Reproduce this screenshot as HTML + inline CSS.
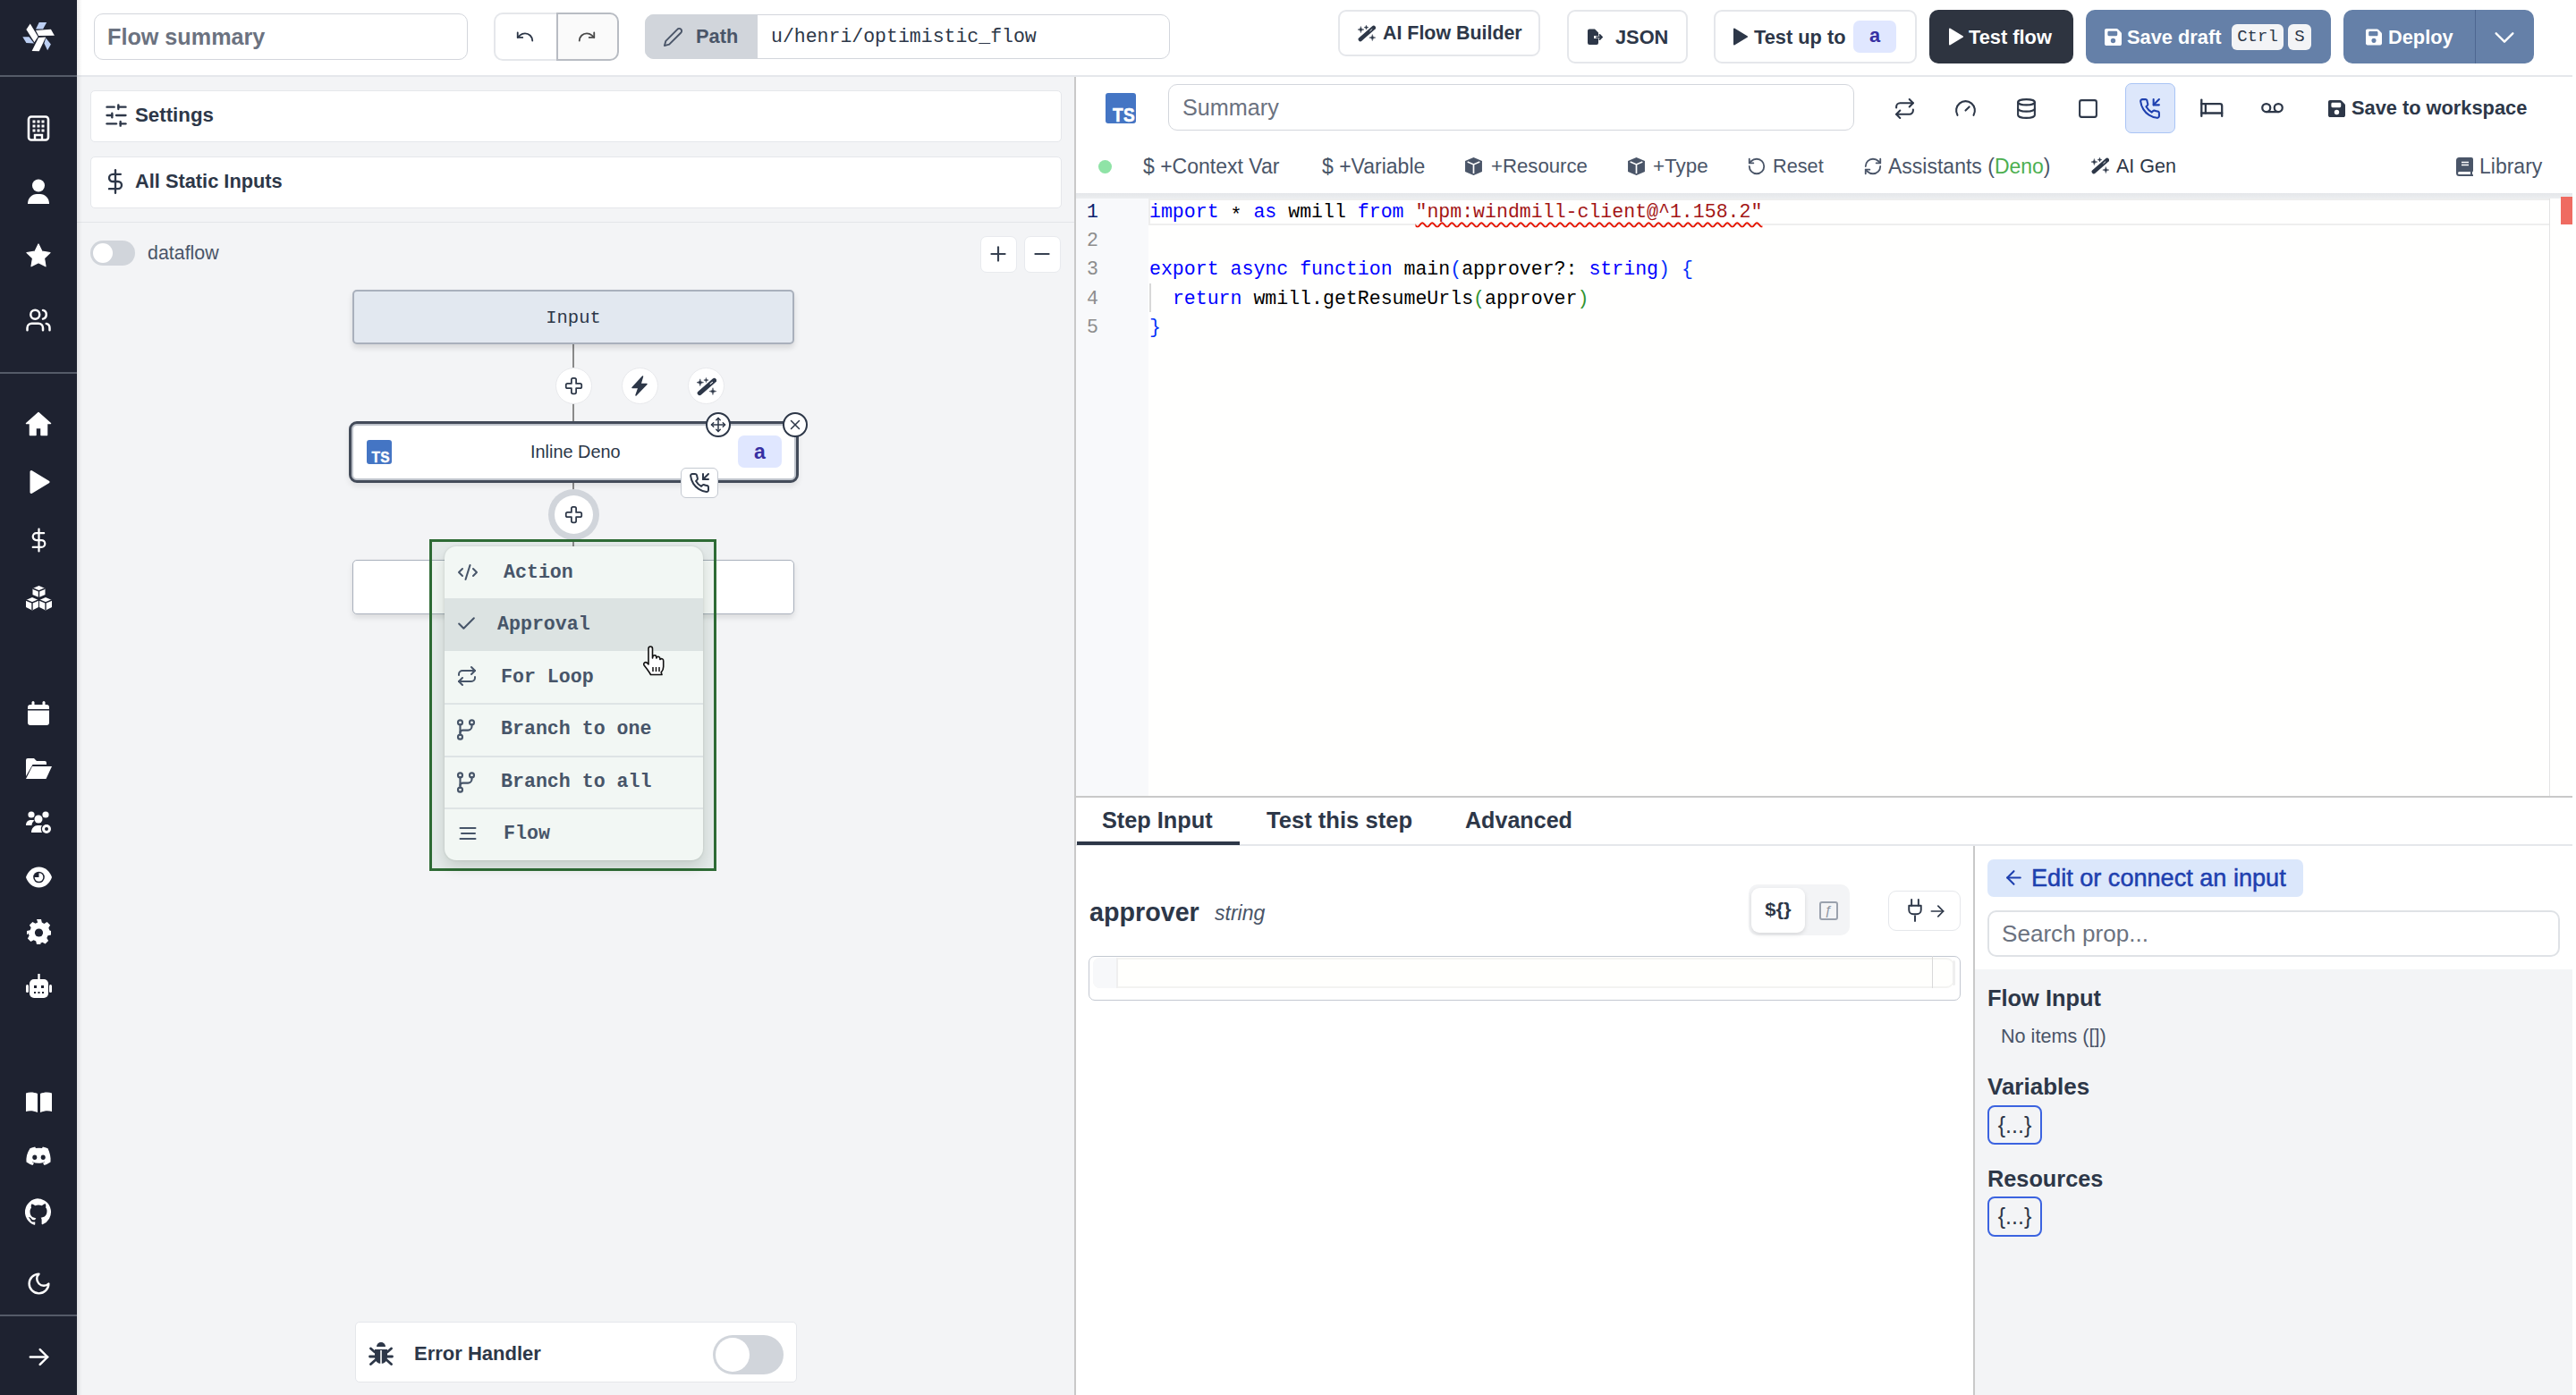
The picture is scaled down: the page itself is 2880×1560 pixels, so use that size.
<!DOCTYPE html>
<html><head><meta charset="utf-8">
<style>
*{box-sizing:border-box;margin:0;padding:0}
html,body{width:2880px;height:1560px;overflow:hidden;background:#fff}
body{font-family:"Liberation Sans",sans-serif;color:#2d3748;position:relative}
.a{position:absolute}
.mono{font-family:"Liberation Mono",monospace}
.nw{white-space:nowrap}
svg{display:block}
.ic{fill:none;stroke:currentColor;stroke-width:2;stroke-linecap:round;stroke-linejoin:round}
.btn{position:absolute;border:2px solid #e5e7eb;border-radius:9px;background:#fff}
</style></head><body>

<!-- SIDEBAR -->
<div class="a" id="sidebar" style="left:0;top:0;width:86px;height:1560px;background:#1e2230;box-shadow:4px 0 10px rgba(0,0,0,0.06)"></div>
<div class="a" style="left:0;top:84px;width:86px;height:1.5px;background:#555b68"></div>
<div class="a" style="left:0;top:416px;width:86px;height:1.5px;background:#555b68"></div>
<div class="a" style="left:0;top:1470px;width:86px;height:1.5px;background:#555b68"></div>


<!-- SIDEBAR ICONS -->
<svg class="a" style="left:0;top:0" width="86" height="84" viewBox="0 0 86 84">
 <polygon points="33.75,26.5 29.4,33.1 38.4,47.2 42.5,40.9" fill="#fff"/>
 <polygon points="40,34 56.9,32.8 60.9,39.7 43.1,40" fill="#fff"/>
 <polygon points="43.1,41.9 51.25,41.6 43.75,57.2 35.6,56.9" fill="#fff"/>
 <polygon points="43.75,25 52.2,25 48.1,32.5 40,32.5" fill="#bccff3"/>
 <polygon points="25.3,41.25 32.5,41.25 38.1,48.4 29.4,48.1" fill="#bccff3"/>
 <polygon points="51.25,42.5 56.9,49.4 53.1,56.25 49.4,48.4" fill="#bccff3"/>
</svg>
<!-- building -->
<svg class="a" style="left:30px;top:129px" width="26" height="29" viewBox="0 0 26 29"><rect x="2" y="1.5" width="22" height="26" rx="3" fill="none" stroke="#fff" stroke-width="2.6"/>
 <g fill="#fff"><rect x="6.5" y="5.5" width="3" height="3"/><rect x="11.5" y="5.5" width="3" height="3"/><rect x="16.5" y="5.5" width="3" height="3"/><rect x="6.5" y="10.5" width="3" height="3"/><rect x="11.5" y="10.5" width="3" height="3"/><rect x="16.5" y="10.5" width="3" height="3"/><rect x="6.5" y="15.5" width="3" height="3"/><rect x="11.5" y="15.5" width="3" height="3"/><rect x="16.5" y="15.5" width="3" height="3"/></g>
 <path d="M9 27v-5h8v5" fill="none" stroke="#fff" stroke-width="2.4"/></svg>
<!-- user -->
<svg class="a" style="left:30px;top:200px" width="26" height="29" viewBox="0 0 26 29"><circle cx="13" cy="7.5" r="7" fill="#fff"/><path d="M1 28c0-7 5-11 10-11h4c5 0 10 4 10 11z" fill="#fff"/></svg>
<!-- star -->
<svg class="a" style="left:29px;top:272px" width="28" height="27" viewBox="0 0 28 27"><path d="M14 1l4 8.2 9 1.3-6.5 6.3 1.5 9L14 21.6 6 25.8l1.5-9L1 10.5l9-1.3z" fill="#fff" stroke="#fff" stroke-width="1.2" stroke-linejoin="round"/></svg>
<!-- users -->
<svg class="a ic" style="left:28px;top:343px;color:#fff" width="30" height="30" viewBox="0 0 24 24" stroke-width="2"><path d="M16 21v-2a4 4 0 0 0-4-4H6a4 4 0 0 0-4 4v2"/><circle cx="9" cy="7" r="4"/><path d="M22 21v-2a4 4 0 0 0-3-3.87"/><path d="M16 3.13a4 4 0 0 1 0 7.75"/></svg>
<!-- home -->
<svg class="a" style="left:28px;top:460px" width="30" height="28" viewBox="0 0 30 28"><path d="M15 1.5L1.5 13.5h4V26.5h6.5v-8h6v8h6.5V13.5h4z" fill="#fff" stroke="#fff" stroke-width="1.5" stroke-linejoin="round"/></svg>
<!-- play -->
<svg class="a" style="left:32px;top:525px" width="24" height="28" viewBox="0 0 24 28"><path d="M3 2.5L22 14 3 25.5z" fill="#fff" stroke="#fff" stroke-width="3" stroke-linejoin="round"/></svg>
<!-- dollar -->
<svg class="a ic" style="left:30px;top:588px;color:#fff" width="27" height="32" viewBox="0 0 24 24" stroke-width="2.6"><line x1="12" x2="12" y1="1" y2="23"/><path d="M17 5H9.5a3.5 3.5 0 0 0 0 7h5a3.5 3.5 0 0 1 0 7H6"/></svg>
<!-- cubes -->
<svg class="a" style="left:28px;top:654px" width="31" height="30" viewBox="0 0 31 30"><g fill="#fff">
 <path d="M15.5 1l7 3v7l-7 3-7-3V4z"/><path d="M8 14l7 3v8l-7 3.5L1 25v-8z"/><path d="M23 14l7 3v8l-7 3.5-7-3.5v-8z"/></g>
 <g stroke="#1e2230" stroke-width="1.4" fill="none"><path d="M8.5 4l7 3 7-3M15.5 7v7"/><path d="M1 17l7 3 7-3M8 20v8"/><path d="M16 17l7 3 7-3M23 20v8"/></g></svg>
<!-- calendar -->
<svg class="a" style="left:30px;top:783px" width="26" height="29" viewBox="0 0 26 29"><rect x="1" y="5" width="24" height="23" rx="3" fill="#fff"/><rect x="5.5" y="1" width="3" height="7" rx="1.5" fill="#fff"/><rect x="17.5" y="1" width="3" height="7" rx="1.5" fill="#fff"/><rect x="1" y="10" width="24" height="1.5" fill="#1e2230"/></svg>
<!-- folder open -->
<svg class="a" style="left:28px;top:847px" width="31" height="25" viewBox="0 0 31 25"><path d="M1 3a2 2 0 0 1 2-2h7l3 3h9a2 2 0 0 1 2 2v2H8.5L1 21z" fill="#fff"/><path d="M8 10h22l-6.5 14H1z" fill="#fff"/></svg>
<!-- users gear -->
<svg class="a" style="left:28px;top:906px" width="31" height="28" viewBox="0 0 31 28"><g fill="#fff"><circle cx="7" cy="5" r="3.6"/><circle cx="23" cy="5" r="3.6"/><circle cx="15" cy="10" r="4.5"/><path d="M1 17c0-4 2.5-6 5.5-6h2c1 0 1.5.3 2 .6C8.5 13 7.5 15 7.5 17z"/><path d="M7 25c0-5 3.5-8 7-8h3c1 0 2 .2 2.8.6A7 7 0 0 0 19 25z"/></g><circle cx="24" cy="21" r="5.6" fill="#fff" stroke="#1e2230" stroke-width="1.2"/><circle cx="24" cy="21" r="2" fill="#1e2230"/></svg>
<!-- eye -->
<svg class="a" style="left:28px;top:968px" width="31" height="26" viewBox="0 0 31 26"><path d="M15.5 1.5C8 1.5 3 7 1 13c2 6 7 11.5 14.5 11.5S28 19 30 13C28 7 23 1.5 15.5 1.5z" fill="#fff"/><circle cx="15.5" cy="13" r="6.3" fill="#1e2230"/><path d="M15.5 8.2a4.8 4.8 0 1 1-4.8 4.8h4.8z" fill="#fff"/></svg>
<!-- gear -->
<svg class="a" style="left:29px;top:1027px" width="29" height="30" viewBox="0 0 29 30"><path d="M12 1h5l.8 3.6 2.6 1.3 3.2-1.8 3.5 3.5-1.8 3.2 1.2 2.6L28 14v4.5l-3.5.8-1.2 2.6 1.8 3.2-3.5 3.5-3.2-1.8-2.6 1.2L17 29h-5l-.8-3.6-2.6-1.2-3.2 1.8-3.5-3.5 1.8-3.2-1.2-2.6L1 18.5V14l3.5-.8 1.2-2.6-1.8-3.2 3.5-3.5 3.2 1.8 2.6-1.3z" fill="#fff"/><circle cx="14.5" cy="16" r="4.6" fill="#1e2230"/></svg>
<!-- robot -->
<svg class="a" style="left:28px;top:1088px" width="31" height="29" viewBox="0 0 31 29"><rect x="14.3" y="1" width="2.4" height="7" fill="#fff"/><rect x="5" y="7" width="21" height="21" rx="5" fill="#fff"/><rect x="1" y="13" width="3" height="9" rx="1.5" fill="#fff"/><rect x="27" y="13" width="3" height="9" rx="1.5" fill="#fff"/><g fill="#1e2230"><rect x="10" y="14" width="3" height="3"/><rect x="18" y="14" width="3" height="3"/><rect x="10" y="21" width="2" height="2"/><rect x="14.5" y="21" width="2" height="2"/><rect x="19" y="21" width="2" height="2"/></g></svg>
<!-- book open -->
<svg class="a" style="left:28px;top:1220px" width="31" height="25" viewBox="0 0 31 25"><path d="M1 2.5C4.5 1 9.5 1 14 3v21C9.5 22 4.5 22 1 23z" fill="#fff"/><path d="M30 2.5C26.5 1 21.5 1 17 3v21c4.5-2 9.5-2 13-1z" fill="#fff"/></svg>
<!-- discord -->
<svg class="a" style="left:29px;top:1282px" width="29" height="22" viewBox="0 0 29 22"><path d="M24.5 2.2A23 23 0 0 0 18.8.5l-.8 1.6a21 21 0 0 0-7 0L10.2.5a23 23 0 0 0-5.7 1.7C1 7.5 0 12.6.5 17.6A23 23 0 0 0 7.5 21l1.5-2.3a14 14 0 0 1-2.3-1.1l.5-.4c4.5 2 9.300 2 13.600 0l.5.4a14 14 0 0 1-2.300 1.100L20.5 21a23 23 0 0 0 7-3.400c.600-5.800-.900-10.800-3-15.400z" fill="#fff"/><ellipse cx="9.8" cy="12.3" rx="2.5" ry="2.7" fill="#1e2230"/><ellipse cx="19.2" cy="12.3" rx="2.5" ry="2.7" fill="#1e2230"/></svg>
<!-- github -->
<svg class="a" style="left:28px;top:1340px" width="30" height="30" viewBox="0 0 24 24"><path fill="#fff" d="M12 .3a12 12 0 0 0-3.8 23.400c.6.100.8-.3.8-.6v-2c-3.300.7-4-1.600-4-1.600-.5-1.400-1.300-1.800-1.300-1.800-1.100-.7.100-.7.100-.7 1.200.1 1.800 1.200 1.800 1.200 1.100 1.800 2.800 1.300 3.500 1 .1-.8.400-1.300.8-1.600-2.700-.3-5.500-1.300-5.500-5.900 0-1.300.5-2.400 1.200-3.200-.1-.4-.5-1.600.1-3.200 0 0 1-.3 3.300 1.200a11.500 11.500 0 0 1 6 0C17.300 4.700 18.300 5 18.300 5c.7 1.700.2 2.900.1 3.200.8.800 1.200 1.900 1.200 3.200 0 4.600-2.800 5.600-5.500 5.900.4.400.8 1.100.8 2.200v3.300c0 .3.200.7.800.6A12 12 0 0 0 12 .3"/></svg>
<!-- moon -->
<svg class="a ic" style="left:29px;top:1421px;color:#fff" width="29" height="29" viewBox="0 0 24 24" stroke-width="2"><path d="M12 3a6 6 0 0 0 9 9 9 9 0 1 1-9-9Z"/></svg>
<!-- arrow right -->
<svg class="a ic" style="left:29px;top:1503px;color:#fff" width="29" height="29" viewBox="0 0 24 24" stroke-width="2.9"><path d="M4 12h16"/><path d="m13 5 7 7-7 7"/></svg>

<!-- TOPBAR -->
<div class="a" style="left:86px;top:0;width:2790px;height:84px;background:#fff"></div>
<div class="a" style="left:86px;top:84px;width:2790px;height:2px;background:#e5e7eb"></div>


<!-- TOPBAR CONTENT -->
<div class="a" style="left:105px;top:15px;width:418px;height:52px;border:1.5px solid #d3d6dc;border-radius:10px;background:#fff"></div>
<div class="a nw" id="t_flowsummary" style="left:120px;top:26px;font-size:25.2px;line-height:30px;font-weight:700;color:#6b7280">Flow summary</div>

<div class="a" style="left:552px;top:14px;width:71px;height:54px;border:2px solid #e5e7eb;border-right:none;border-radius:10px 0 0 10px;background:#fff"></div>
<div class="a" style="left:622px;top:14px;width:70px;height:54px;border:2px solid #b8bcc3;border-radius:0 10px 10px 0;background:#fafafa"></div>
<svg class="a ic" style="left:576px;top:30px;color:#2d3748" width="22" height="22" viewBox="0 0 24 24"><path d="M3 7v6h6"/><path d="M21 17a9 9 0 0 0-9-9 9 9 0 0 0-6 2.3L3 13"/></svg>
<svg class="a ic" style="left:645px;top:30px;color:#4a4a4a" width="22" height="22" viewBox="0 0 24 24"><path d="M21 7v6h-6"/><path d="M3 17a9 9 0 0 1 9-9 9 9 0 0 1 6 2.3l3 2.7"/></svg>

<div class="a" style="left:721px;top:16px;width:587px;height:50px;border:1.5px solid #d3d6dc;border-radius:10px;background:#fff"></div>
<div class="a" style="left:721px;top:16px;width:126px;height:50px;border-radius:10px 0 0 10px;background:#d1d5db"></div>
<svg class="a ic" style="left:741px;top:30px;color:#4a5568" width="23" height="23" viewBox="0 0 24 24" stroke-width="2"><path d="M17 3a2.85 2.83 0 1 1 4 4L7.5 20.5 2 22l1.5-5.5Z"/></svg>
<div class="a nw" id="t_path" style="left:778px;top:27px;font-size:21.8px;line-height:28px;font-weight:700;color:#4a5568">Path</div>
<div class="a nw mono" id="t_pathval" style="left:862px;top:26px;font-size:21.5px;line-height:30px;color:#2d3748">u/henri/optimistic_flow</div>

<div class="btn" style="left:1496px;top:11px;width:226px;height:52px"></div>
<svg class="a" style="left:1518px;top:27px" width="20" height="20" viewBox="0 0 24 24"><path d="M3.5 20.3L21.3 4.8" stroke="#2d3748" stroke-width="5.6" stroke-linecap="round"/><path d="M16.5 9.2l2.6-2.3" stroke="#fff" stroke-width="1.1" stroke-linecap="round"/><path fill="#2d3748" stroke="#2d3748" stroke-width="0.6" d="M4.1 3.0999999999999996Q4.1 7.3 8.3 7.3Q4.1 7.3 4.1 11.5Q4.1 7.3 -0.10000000000000053 7.3Q4.1 7.3 4.1 3.0999999999999996ZM11.4 1.6000000000000005Q11.4 4.4 14.2 4.4Q11.4 4.4 11.4 7.2Q11.4 4.4 8.600000000000001 4.4Q11.4 4.4 11.4 1.6000000000000005ZM19.6 13.900000000000002Q19.6 18.1 23.8 18.1Q19.6 18.1 19.6 22.3Q19.6 18.1 15.400000000000002 18.1Q19.6 18.1 19.6 13.900000000000002Z"/></svg>
<div class="a nw" id="t_aiflow" style="left:1546px;top:23px;font-size:21.4px;line-height:28px;font-weight:700;color:#2d3748">AI Flow Builder</div>

<div class="btn" style="left:1752px;top:11px;width:135px;height:60px"></div>
<svg class="a" style="left:1774px;top:32px" width="18" height="19" viewBox="0 0 18 19"><path d="M1 2.5a2 2 0 0 1 2-2h6l4 4v3.5H8v3h5V16a2 2 0 0 1-2 2H3a2 2 0 0 1-2-2z" fill="#2d3748"/><path d="M11 9.5h5.5M14.5 7l2.5 2.5-2.5 2.5" stroke="#2d3748" stroke-width="1.8" fill="none" stroke-linecap="round"/></svg>
<div class="a nw" id="t_json" style="left:1806px;top:28px;font-size:21.8px;line-height:28px;font-weight:700;color:#2d3748">JSON</div>

<div class="btn" style="left:1916px;top:11px;width:227px;height:60px"></div>
<svg class="a" style="left:1937px;top:31px" width="17" height="20" viewBox="0 0 17 20"><path d="M2 1.5 L16 10 L2 18.5z" fill="#2d3748" stroke="#2d3748" stroke-width="2" stroke-linejoin="round"/></svg>
<div class="a nw" id="t_testupto" style="left:1961px;top:28px;font-size:21.8px;line-height:28px;font-weight:700;color:#2d3748">Test up to</div>
<div class="a" style="left:2072px;top:23px;width:48px;height:36px;border-radius:7px;background:#e0e7ff"></div>
<div class="a nw" style="left:2072px;top:26px;width:48px;text-align:center;font-size:21.8px;line-height:28px;font-weight:700;color:#3730a3">a</div>

<div class="a" style="left:2157px;top:11px;width:161px;height:60px;border-radius:10px;background:#2e3440"></div>
<svg class="a" style="left:2178px;top:31px" width="17" height="20" viewBox="0 0 17 20"><path d="M2 1.5 L16 10 L2 18.5z" fill="#fff" stroke="#fff" stroke-width="2" stroke-linejoin="round"/></svg>
<div class="a nw" id="t_testflow" style="left:2201px;top:28px;font-size:21.8px;line-height:28px;font-weight:700;color:#fff">Test flow</div>

<div class="a" style="left:2332px;top:11px;width:274px;height:60px;border-radius:10px;background:#6580a8"></div>
<svg class="a" style="left:2353px;top:32px" width="19" height="19" viewBox="0 0 448 448"><path fill="#fff" d="M48 0C21.5 0 0 21.5 0 48v352c0 26.5 21.5 48 48 48h352c26.5 0 48-21.5 48-48V134.6c0-12.7-5.1-24.9-14.1-33.9L347.3 14.1C338.3 5.1 326.100 0 313.400 0zm32 96c0-17.700 14.300-32 32-32h192c17.700 0 32 14.300 32 32v64c0 17.700-14.300 32-32 32H112c-17.700 0-32-14.300-32-32zm144 160a64 64 0 1 1 0 128 64 64 0 1 1 0-128"/></svg>
<div class="a nw" id="t_savedraft" style="left:2378px;top:28px;font-size:21.8px;line-height:28px;font-weight:700;color:#fff">Save draft</div>
<div class="a" style="left:2495px;top:27px;width:58px;height:29px;border-radius:6px;background:#f3f4f6"></div>
<div class="a nw mono" style="left:2495px;top:28px;width:58px;text-align:center;font-size:19px;line-height:27px;color:#2d3748">Ctrl</div>
<div class="a" style="left:2558px;top:27px;width:26px;height:29px;border-radius:6px;background:#f3f4f6"></div>
<div class="a nw mono" style="left:2558px;top:28px;width:26px;text-align:center;font-size:19px;line-height:27px;color:#2d3748">S</div>

<div class="a" style="left:2620px;top:11px;width:213px;height:60px;border-radius:10px;background:#6580a8"></div>
<div class="a" style="left:2767px;top:11px;width:1px;height:60px;background:#4e6791"></div>
<svg class="a" style="left:2645px;top:32px" width="18" height="19" viewBox="0 0 448 448"><path fill="#fff" d="M48 0C21.5 0 0 21.5 0 48v352c0 26.5 21.5 48 48 48h352c26.5 0 48-21.5 48-48V134.6c0-12.7-5.1-24.9-14.1-33.9L347.3 14.1C338.3 5.1 326.100 0 313.400 0zm32 96c0-17.700 14.300-32 32-32h192c17.700 0 32 14.300 32 32v64c0 17.700-14.300 32-32 32H112c-17.700 0-32-14.300-32-32zm144 160a64 64 0 1 1 0 128 64 64 0 1 1 0-128"/></svg>
<div class="a nw" id="t_deploy" style="left:2670px;top:28px;font-size:21.8px;line-height:28px;font-weight:700;color:#fff">Deploy</div>
<svg class="a ic" style="left:2786px;top:28px;color:#fff" width="28" height="28" viewBox="0 0 24 24" stroke-width="2.2"><path d="m4 8 8 8 8-8"/></svg>

<!-- LEFT FLOW PANEL -->
<div class="a" style="left:86px;top:86px;width:1115px;height:1474px;background:#f3f4f6"></div>
<div class="a" style="left:1201px;top:86px;width:2px;height:1474px;background:#c9c9c9"></div>


<!-- FLOW PANEL CONTENT -->
<div class="a" style="left:101px;top:100.5px;width:1085.5px;height:58.5px;border:1.5px solid #e5e7eb;border-radius:5px;background:#fff"></div>
<svg class="a ic" style="left:116px;top:115px;color:#2d3748" width="28" height="28" viewBox="0 0 24 24" stroke-width="2"><line x1="21" x2="14" y1="4" y2="4"/><line x1="10" x2="3" y1="4" y2="4"/><line x1="21" x2="12" y1="12" y2="12"/><line x1="8" x2="3" y1="12" y2="12"/><line x1="21" x2="16" y1="20" y2="20"/><line x1="12" x2="3" y1="20" y2="20"/><line x1="14" x2="14" y1="2" y2="6"/><line x1="8" x2="8" y1="10" y2="14"/><line x1="16" x2="16" y1="18" y2="22"/></svg>
<div class="a nw" id="t_settings" style="left:151px;top:115px;font-size:22.3px;line-height:28px;font-weight:700;color:#2d3748">Settings</div>

<div class="a" style="left:101px;top:174.5px;width:1085.5px;height:58.5px;border:1.5px solid #e5e7eb;border-radius:5px;background:#fff"></div>
<svg class="a ic" style="left:115px;top:187px;color:#2d3748" width="28" height="32" viewBox="0 0 24 24" stroke-width="2"><line x1="12" x2="12" y1="1" y2="23"/><path d="M17 5H9.5a3.5 3.5 0 0 0 0 7h5a3.5 3.5 0 0 1 0 7H6"/></svg>
<div class="a nw" id="t_static" style="left:151px;top:189px;font-size:21.8px;line-height:28px;font-weight:700;color:#2d3748">All Static Inputs</div>

<div class="a" style="left:86px;top:247.5px;width:1115px;height:1.5px;background:#e3e5e9"></div>

<div class="a" style="left:101px;top:269px;width:50px;height:28px;border-radius:14px;background:#d1d5db"></div>
<div class="a" style="left:104px;top:272px;width:22px;height:22px;border-radius:11px;background:#fff"></div>
<div class="a nw" id="t_dataflow" style="left:165px;top:269px;font-size:21.4px;line-height:28px;color:#4a5568">dataflow</div>

<div class="a" style="left:1095.5px;top:263.5px;width:41px;height:41px;border:1.5px solid #e8eaee;border-radius:7px;background:#fff"></div>
<svg class="a ic" style="left:1103px;top:270.5px;color:#374151" width="26" height="26" viewBox="0 0 24 24" stroke-width="2.2"><path d="M5 12h14"/><path d="M12 5v14"/></svg>
<div class="a" style="left:1144.5px;top:263.5px;width:41px;height:41px;border:1.5px solid #e8eaee;border-radius:7px;background:#fff"></div>
<svg class="a ic" style="left:1152px;top:270.5px;color:#374151" width="26" height="26" viewBox="0 0 24 24" stroke-width="2.2"><path d="M5 12h14"/></svg>

<!-- edges -->
<div class="a" style="left:640px;top:384px;width:2px;height:90px;background:#8a8a8a"></div>
<div class="a" style="left:640px;top:538px;width:2px;height:75px;background:#8a8a8a"></div>

<!-- Input node -->
<div class="a" style="left:394px;top:324px;width:494px;height:61px;border:2px solid #a9b0bc;border-radius:5px;background:#e2e8f0;box-shadow:0 4px 6px rgba(0,0,0,0.12)"></div>
<div class="a nw mono" id="t_input" style="left:394px;top:341px;width:494px;text-align:center;font-size:20.5px;line-height:30px;color:#2d3748">Input</div>

<!-- circles -->
<div class="a" style="left:621px;top:411px;width:41px;height:41px;border:1px solid #e8e9ec;border-radius:50%;background:#fff"></div>
<svg class="a ic" style="left:631px;top:421px;color:#2d3748" width="21" height="21" viewBox="0 0 24 24" stroke-width="2.3"><path d="M11 2a2 2 0 0 0-2 2v5H4a2 2 0 0 0-2 2v2c0 1.1.9 2 2 2h5v5c0 1.1.9 2 2 2h2a2 2 0 0 0 2-2v-5h5a2 2 0 0 0 2-2v-2a2 2 0 0 0-2-2h-5V4a2 2 0 0 0-2-2h-2z"/></svg>
<div class="a" style="left:695px;top:411px;width:41px;height:41px;border:1px solid #e8e9ec;border-radius:50%;background:#fff"></div>
<svg class="a" style="left:705px;top:420px" width="20" height="23" viewBox="0 0 20 23"><path d="M13.5 1 L2 13.5 h7 L6 22 L18 9.5 h-7z" fill="#2d3748" stroke="#2d3748" stroke-width="1.5" stroke-linejoin="round"/></svg>
<div class="a" style="left:769px;top:411px;width:41px;height:41px;border:1px solid #e8e9ec;border-radius:50%;background:#fff"></div>
<svg class="a" style="left:779px;top:421px" width="22" height="22" viewBox="0 0 24 24"><path d="M3.5 20.3L21.3 4.8" stroke="#2d3748" stroke-width="5.6" stroke-linecap="round"/><path d="M16.5 9.2l2.6-2.3" stroke="#fff" stroke-width="1.1" stroke-linecap="round"/><path fill="#2d3748" stroke="#2d3748" stroke-width="0.6" d="M4.1 3.0999999999999996Q4.1 7.3 8.3 7.3Q4.1 7.3 4.1 11.5Q4.1 7.3 -0.10000000000000053 7.3Q4.1 7.3 4.1 3.0999999999999996ZM11.4 1.6000000000000005Q11.4 4.4 14.2 4.4Q11.4 4.4 11.4 7.2Q11.4 4.4 8.600000000000001 4.4Q11.4 4.4 11.4 1.6000000000000005ZM19.6 13.900000000000002Q19.6 18.1 23.8 18.1Q19.6 18.1 19.6 22.3Q19.6 18.1 15.400000000000002 18.1Q19.6 18.1 19.6 13.900000000000002Z"/></svg>

<!-- Inline Deno node -->
<div class="a" style="left:390px;top:471px;width:503px;height:69px;border:3px solid #434b59;border-radius:9px;background:#fff;box-shadow:inset 0 0 0 2px #bfc4cc, 0 4px 6px rgba(0,0,0,0.08)"></div>
<div class="a" style="left:410px;top:492px;width:28px;height:27px;border-radius:3px;background:#4475c4"></div>
<div class="a nw" style="left:415.5px;top:504px;font-size:15.5px;line-height:16px;font-weight:700;color:#fff;letter-spacing:0.3px;-webkit-text-stroke:0.4px #fff;transform:scale(1,1.12);transform-origin:0 100%">TS</div>
<div class="a nw" id="t_inline" style="left:593px;top:491px;font-size:19.9px;line-height:28px;color:#2d3748">Inline Deno</div>
<div class="a" style="left:825px;top:487px;width:49px;height:36px;border-radius:7px;background:#e0e7ff"></div>
<div class="a nw" style="left:825px;top:491px;width:49px;text-align:center;font-size:23px;line-height:28px;font-weight:700;color:#3730a3">a</div>
<div class="a" style="left:789px;top:461px;width:28px;height:28px;border:2.5px solid #2d3748;border-radius:50%;background:#fff"></div>
<svg class="a ic" style="left:794px;top:466px;color:#2d3748" width="18" height="18" viewBox="0 0 24 24" stroke-width="2"><polyline points="5 9 2 12 5 15"/><polyline points="9 5 12 2 15 5"/><polyline points="15 19 12 22 9 19"/><polyline points="19 9 22 12 19 15"/><line x1="2" x2="22" y1="12" y2="12"/><line x1="12" x2="12" y1="2" y2="22"/></svg>
<div class="a" style="left:875px;top:461px;width:28px;height:28px;border:2.5px solid #2d3748;border-radius:50%;background:#fff"></div>
<svg class="a ic" style="left:880px;top:466px;color:#2d3748" width="18" height="18" viewBox="0 0 24 24" stroke-width="2"><path d="M18 6 6 18"/><path d="m6 6 12 12"/></svg>
<div class="a" style="left:761px;top:523px;width:42px;height:34px;border:1px solid #c4c9d1;border-radius:6px;background:#fff"></div>
<svg class="a ic" style="left:770px;top:528px;color:#2d3748" width="24" height="24" viewBox="0 0 24 24" stroke-width="1.8"><polyline points="16 2 16 8 22 8"/><line x1="22" x2="16" y1="2" y2="8"/><path d="M22 16.92v3a2 2 0 0 1-2.18 2 19.79 19.79 0 0 1-8.63-3.07 19.5 19.5 0 0 1-6-6 19.79 19.79 0 0 1-3.070-8.670A2 2 0 0 1 4.11 2h3a2 2 0 0 1 2 1.72 12.84 12.84 0 0 0 .7 2.81 2 2 0 0 1-.45 2.11L8.09 9.91a16 16 0 0 0 6 6l1.27-1.27a2 2 0 0 1 2.11-.45 12.84 12.84 0 0 0 2.81.7A2 2 0 0 1 22 16.92z"/></svg>

<!-- plus circle 2 -->
<div class="a" style="left:613px;top:547px;width:57px;height:57px;border-radius:50%;background:#d1d5db"></div>
<div class="a" style="left:620px;top:554px;width:43px;height:43px;border-radius:50%;background:#fff"></div>
<svg class="a ic" style="left:631px;top:565px;color:#2d3748" width="21" height="21" viewBox="0 0 24 24" stroke-width="2.3"><path d="M11 2a2 2 0 0 0-2 2v5H4a2 2 0 0 0-2 2v2c0 1.1.9 2 2 2h5v5c0 1.1.9 2 2 2h2a2 2 0 0 0 2-2v-5h5a2 2 0 0 0 2-2v-2a2 2 0 0 0-2-2h-5V4a2 2 0 0 0-2-2h-2z"/></svg>

<!-- third node -->
<div class="a" style="left:394px;top:626px;width:494px;height:61px;border:1.5px solid #a9b0bc;border-radius:5px;background:#fff;box-shadow:0 4px 6px rgba(0,0,0,0.1)"></div>

<!-- green box + menu -->
<div class="a" style="left:480px;top:603px;width:321px;height:371px;border:3px solid #2e6b35;background:rgba(40,110,70,0.07)"></div>
<div class="a" style="left:640px;top:606px;width:2px;height:6px;background:#8a8a8a"></div>
<div class="a" style="left:497px;top:611px;width:289px;height:351px;border-radius:13px;background:#f2f7f4;box-shadow:0 8px 16px rgba(0,30,10,0.13), 0 0 3px rgba(0,30,10,0.12);overflow:hidden">
  <div class="a" style="left:0;top:58px;width:289px;height:59px;background:#dce3e2"></div>
  <div class="a" style="left:0;top:175px;width:289px;height:1.5px;background:#dee4e5"></div>
  <div class="a" style="left:0;top:234px;width:289px;height:1.5px;background:#dee4e5"></div>
  <div class="a" style="left:0;top:292px;width:289px;height:1.5px;background:#dee4e5"></div>
</div>
<svg class="a ic" style="left:510px;top:628px;color:#475569" width="26" height="24" viewBox="0 0 24 24" stroke-width="2.2"><path d="m18 16 4-4-4-4"/><path d="m6 8-4 4 4 4"/><path d="m14.5 4-5 16"/></svg>
<div class="a nw mono" id="m_action" style="left:563px;top:625px;font-size:21.6px;line-height:30px;font-weight:700;color:#475569">Action</div>
<svg class="a ic" style="left:509px;top:685px;color:#475569" width="25" height="25" viewBox="0 0 24 24" stroke-width="3"><path d="M20 6 9 17l-5-5"/></svg>
<div class="a nw mono" id="m_approval" style="left:556px;top:683px;font-size:21.6px;line-height:30px;font-weight:700;color:#475569">Approval</div>
<svg class="a ic" style="left:510px;top:743px;color:#475569" width="24" height="26" viewBox="0 0 24 24" stroke-width="2"><path d="m17 2 4 4-4 4"/><path d="M3 11v-1a4 4 0 0 1 4-4h14"/><path d="m7 22-4-4 4-4"/><path d="M21 13v1a4 4 0 0 1-4 4H3"/></svg>
<div class="a nw mono" id="m_forloop" style="left:560px;top:742px;font-size:21.6px;line-height:30px;font-weight:700;color:#475569">For Loop</div>
<svg class="a ic" style="left:508px;top:803px;color:#475569" width="26" height="26" viewBox="0 0 24 24" stroke-width="2.2"><circle cx="6" cy="4.5" r="2.3"/><circle cx="18" cy="4.5" r="2.3"/><circle cx="6" cy="19.5" r="2.3"/><path d="M6 6.8v10.4"/><path d="M18 6.8v1.700a4 4 0 0 1-4 4H8.500a2.500 2.500 0 0 0-2.500 2.500"/></svg>
<div class="a nw mono" id="m_b1" style="left:560px;top:800px;font-size:21.6px;line-height:30px;font-weight:700;color:#475569">Branch to one</div>
<svg class="a ic" style="left:508px;top:862px;color:#475569" width="26" height="26" viewBox="0 0 24 24" stroke-width="2.2"><circle cx="6" cy="4.5" r="2.3"/><circle cx="18" cy="4.5" r="2.3"/><circle cx="6" cy="19.5" r="2.3"/><path d="M6 6.8v10.4"/><path d="M18 6.8v1.700a4 4 0 0 1-4 4H8.500a2.500 2.500 0 0 0-2.500 2.500"/></svg>
<div class="a nw mono" id="m_b2" style="left:560px;top:859px;font-size:21.6px;line-height:30px;font-weight:700;color:#475569">Branch to all</div>
<svg class="a ic" style="left:511px;top:920px;color:#475569" width="24" height="24" viewBox="0 0 24 24" stroke-width="3"><path d="M3.5 6h17M5 12h15M3.5 18h17"/></svg>
<div class="a nw mono" id="m_flow" style="left:563px;top:917px;font-size:21.6px;line-height:30px;font-weight:700;color:#475569">Flow</div>

<!-- hand cursor -->
<svg class="a" style="left:716px;top:722px" width="32" height="34" viewBox="0 0 32 34"><path d="M9 3.5c0-1.500 1-2.500 2.300-2.500S13.500 2 13.500 3.500V14l.3-1.500c.3-1.200 1.200-1.800 2.200-1.700 1.100.100 1.800 1 1.800 2.200v1l.3-.5c.5-1 1.500-1.400 2.400-1.100.900.300 1.400 1.100 1.400 2.100v1l.4-.3c.7-.600 1.600-.700 2.300-.300.700.400 1.100 1.200 1.100 2v6.500c0 3-1 5-2.500 6.500L24 32.500H11.500L10 30c-1.500-2.500-3.500-5-5.500-7.500C3.500 21.300 3.500 20 4.500 19.200c1-.800 2.300-.600 3.200.300L9 21z" fill="#fff" stroke="#111" stroke-width="1.6" stroke-linejoin="round"/><path d="M14 24v5M17.500 24v5M21 24v5" stroke="#111" stroke-width="1.5"/></svg>

<!-- error handler -->
<div class="a" style="left:397px;top:1478px;width:494px;height:68px;border:1.5px solid #e5e7eb;border-radius:5px;background:#fff"></div>
<svg class="a" style="left:411px;top:1499px" width="30" height="30" viewBox="0 0 30 30"><g fill="#2d3748"><path d="M10 7a5 5 0 0 1 10 0z"/><path d="M8 10h14v9a7 7 0 0 1-14 0z"/></g><g stroke="#2d3748" stroke-width="2.8" stroke-linecap="round"><path d="M8 13L3.500 9M22 13l4.500-4M8 18H2.500M22 18h5.500M8.500 22L3.500 26.500M21.500 22l5 4.500"/></g><path d="M15 11v16" stroke="#fff" stroke-width="1.6"/></svg>
<div class="a nw" id="t_errh" style="left:463px;top:1500px;font-size:22px;line-height:28px;font-weight:700;color:#2d3748">Error Handler</div>
<div class="a" style="left:797px;top:1493px;width:79px;height:44px;border-radius:22px;background:#d1d5db"></div>
<div class="a" style="left:800px;top:1496px;width:38px;height:38px;border-radius:50%;background:#fff"></div>

<div class="a" style="left:86px;top:0;width:6px;height:1560px;background:linear-gradient(90deg,rgba(0,0,0,0.07),rgba(0,0,0,0))"></div>
<!-- RIGHT PANEL -->
<div class="a" style="left:1203px;top:86px;width:1673px;height:1474px;background:#fff"></div>


<!-- RIGHT HEADER -->
<div class="a" style="left:1236px;top:104px;width:34px;height:34px;border-radius:3px;background:#4475c4"></div>
<div class="a nw" style="left:1244px;top:120px;font-size:19px;line-height:20px;font-weight:700;color:#fff;letter-spacing:0.3px;-webkit-text-stroke:0.5px #fff;transform:scale(1,1.12);transform-origin:0 100%">TS</div>
<div class="a" style="left:1306px;top:94px;width:767px;height:52px;border:1.5px solid #d3d6dc;border-radius:10px;background:#fff"></div>
<div class="a nw" id="t_summary" style="left:1322px;top:106px;font-size:25.2px;line-height:28px;color:#6b7280">Summary</div>

<svg class="a ic" style="left:2117px;top:109px;color:#2d3748" width="25" height="25" viewBox="0 0 24 24" stroke-width="1.9"><path d="m17 2 4 4-4 4"/><path d="M3 11v-1a4 4 0 0 1 4-4h14"/><path d="m7 22-4-4 4-4"/><path d="M21 13v1a4 4 0 0 1-4 4H3"/></svg>
<svg class="a ic" style="left:2185px;top:109px;color:#2d3748" width="25" height="25" viewBox="0 0 24 24" stroke-width="1.9"><path d="m12 14 4-4"/><path d="M3.34 19a10 10 0 1 1 17.32 0"/></svg>
<svg class="a ic" style="left:2253px;top:109px;color:#2d3748" width="25" height="25" viewBox="0 0 24 24" stroke-width="1.9"><ellipse cx="12" cy="5" rx="9" ry="3"/><path d="M3 5V19A9 3 0 0 0 21 19V5"/><path d="M3 12A9 3 0 0 0 21 12"/></svg>
<svg class="a ic" style="left:2322px;top:109px;color:#2d3748" width="25" height="25" viewBox="0 0 24 24" stroke-width="1.9"><rect width="18" height="18" x="3" y="3" rx="2"/></svg>
<div class="a" style="left:2376px;top:93px;width:56px;height:56px;border:1px solid #a9c4f5;border-radius:7px;background:#dde7fb"></div>
<svg class="a ic" style="left:2391px;top:109px;color:#1e40af" width="25" height="25" viewBox="0 0 24 24" stroke-width="1.9"><polyline points="16 2 16 8 22 8"/><line x1="22" x2="16" y1="2" y2="8"/><path d="M22 16.92v3a2 2 0 0 1-2.18 2 19.79 19.79 0 0 1-8.63-3.07 19.5 19.5 0 0 1-6-6 19.79 19.79 0 0 1-3.070-8.670A2 2 0 0 1 4.11 2h3a2 2 0 0 1 2 1.72 12.84 12.84 0 0 0 .7 2.81 2 2 0 0 1-.45 2.11L8.09 9.91a16 16 0 0 0 6 6l1.27-1.27a2 2 0 0 1 2.11-.45 12.84 12.84 0 0 0 2.81.7A2 2 0 0 1 22 16.92z"/></svg>
<svg class="a ic" style="left:2459px;top:107px;color:#2d3748" width="27.5" height="27.5" viewBox="0 0 24 24" stroke-width="1.8"><path d="M2 4v16"/><path d="M2 8h18a2 2 0 0 1 2 2v10"/><path d="M2 17h20"/><path d="M6 8v9"/></svg>
<svg class="a ic" style="left:2527px;top:107px;color:#2d3748" width="27" height="27" viewBox="0 0 24 24" stroke-width="1.9"><circle cx="6" cy="12" r="4"/><circle cx="18" cy="12" r="4"/><line x1="6" x2="18" y1="16" y2="16"/></svg>
<svg class="a" style="left:2603px;top:112px" width="19" height="19" viewBox="0 0 448 448"><path fill="#2d3748" d="M48 0C21.5 0 0 21.5 0 48v352c0 26.5 21.5 48 48 48h352c26.5 0 48-21.5 48-48V134.6c0-12.7-5.1-24.9-14.1-33.9L347.3 14.1C338.3 5.1 326.100 0 313.400 0zm32 96c0-17.700 14.300-32 32-32h192c17.700 0 32 14.300 32 32v64c0 17.700-14.300 32-32 32H112c-17.700 0-32-14.300-32-32zm144 160a64 64 0 1 1 0 128 64 64 0 1 1 0-128"/></svg>
<div class="a nw" id="t_savews" style="left:2629px;top:107px;font-size:21.8px;line-height:28px;font-weight:700;color:#2d3748">Save to workspace</div>

<!-- toolbar row 2 -->
<div class="a" style="left:1228px;top:179px;width:15px;height:15px;border-radius:50%;background:#8fe3a6"></div>
<div class="a nw" id="t_ctx" style="left:1278px;top:172px;font-size:23px;line-height:28px;color:#4a5568">$ +Context Var</div>
<div class="a nw" id="t_var" style="left:1478px;top:172px;font-size:23px;line-height:28px;color:#4a5568">$ +Variable</div>
<svg class="a" style="left:1637px;top:175px" width="21" height="22" viewBox="0 0 20 20"><path d="M10 .5l9 3.8v11.4L10 19.5l-9-3.8V4.3z" fill="#4a5568"/><path d="M3.500 5.200L10 8l6.500-2.800M10 8v9.500" stroke="#fff" stroke-width="1.6" fill="none"/></svg>
<div class="a nw" id="t_res" style="left:1667px;top:172px;font-size:22.2px;line-height:28px;color:#4a5568">+Resource</div>
<svg class="a" style="left:1819px;top:175px" width="21" height="22" viewBox="0 0 20 20"><path d="M10 .5l9 3.8v11.4L10 19.5l-9-3.8V4.3z" fill="#4a5568"/><path d="M3.500 5.200L10 8l6.500-2.800M10 8v9.500" stroke="#fff" stroke-width="1.6" fill="none"/></svg>
<div class="a nw" id="t_type" style="left:1848px;top:172px;font-size:22.4px;line-height:28px;color:#4a5568">+Type</div>
<svg class="a ic" style="left:1953px;top:175px;color:#4a5568" width="22" height="22" viewBox="0 0 24 24" stroke-width="2.4"><path d="M3 12a9 9 0 1 0 9-9 9.75 9.75 0 0 0-6.74 2.740L3 8"/><path d="M3 3v5h5"/></svg>
<div class="a nw" id="t_reset" style="left:1982px;top:172px;font-size:21.7px;line-height:28px;color:#4a5568">Reset</div>
<svg class="a ic" style="left:2083px;top:175px;color:#4a5568" width="22" height="22" viewBox="0 0 24 24" stroke-width="2.4"><path d="M3 12a9 9 0 0 1 9-9 9.75 9.75 0 0 1 6.74 2.74L21 8"/><path d="M21 3v5h-5"/><path d="M21 12a9 9 0 0 1-9 9 9.75 9.75 0 0 1-6.74-2.74L3 16"/><path d="M8 16H3v5"/></svg>
<div class="a nw" id="t_assist" style="left:2111px;top:172px;font-size:23px;line-height:28px;color:#4a5568">Assistants (<span style="color:#4caf50">Deno</span>)</div>
<svg class="a" style="left:2338px;top:175px" width="20" height="20" viewBox="0 0 24 24"><path d="M3.5 20.3L21.3 4.8" stroke="#2d3748" stroke-width="5.6" stroke-linecap="round"/><path d="M16.5 9.2l2.6-2.3" stroke="#fff" stroke-width="1.1" stroke-linecap="round"/><path fill="#2d3748" stroke="#2d3748" stroke-width="0.6" d="M4.1 3.0999999999999996Q4.1 7.3 8.3 7.3Q4.1 7.3 4.1 11.5Q4.1 7.3 -0.10000000000000053 7.3Q4.1 7.3 4.1 3.0999999999999996ZM11.4 1.6000000000000005Q11.4 4.4 14.2 4.4Q11.4 4.4 11.4 7.2Q11.4 4.4 8.600000000000001 4.4Q11.4 4.4 11.4 1.6000000000000005ZM19.6 13.900000000000002Q19.6 18.1 23.8 18.1Q19.6 18.1 19.6 22.3Q19.6 18.1 15.400000000000002 18.1Q19.6 18.1 19.6 13.900000000000002Z"/></svg>
<div class="a nw" id="t_aigen" style="left:2366px;top:172px;font-size:21.5px;line-height:28px;color:#2d3748">AI Gen</div>
<svg class="a" style="left:2746px;top:176px" width="19" height="21" viewBox="0 0 19 21"><path d="M3.500 0h13.500a2 2 0 0 1 2 2v13a1.500 1.500 0 0 1-1 1.400V19h.300a1 1 0 0 1 0 2H3.500A3.500 3.500 0 0 1 0 17.500v-14A3.500 3.500 0 0 1 3.500 0zm0 16a1.500 1.500 0 0 0 0 3H16v-3z" fill="#4a5568"/><path d="M6 5.500h8M6 8.500h8" stroke="#fff" stroke-width="1.600"/></svg>
<div class="a nw" id="t_lib" style="left:2772px;top:172px;font-size:23px;line-height:28px;color:#4a5568">Library</div>

<!-- EDITOR -->
<div class="a" style="left:1203px;top:216px;width:1673px;height:6px;background:linear-gradient(#e4e6e9,#eceef0)"></div>
<div class="a" style="left:1203px;top:222px;width:1673px;height:668px;background:#fffffe"></div>
<div class="a" style="left:1203px;top:222px;width:81px;height:668px;background:#f8f9fb"></div>
<div class="a" style="left:1284px;top:222px;width:1566px;height:30px;border:2px solid #eeeeee;border-right:none"></div>
<div class="a" style="left:2850px;top:222px;width:1px;height:668px;background:#e3e3e3"></div>
<div class="a" style="left:2863px;top:220px;width:13px;height:31px;background:#ef6b61"></div>
<div class="a" style="left:1285px;top:317px;width:1.5px;height:32px;background:#d8d8d8"></div>
<div class="a mono" id="gutter" style="left:1203px;top:220.5px;width:25px;text-align:right;font-size:21.55px;line-height:32.4px;color:#8d8d8d;white-space:pre"><span style="color:#0b216f">1</span>
2
3
4
5</div>
<div class="a mono" id="code" style="left:1285px;top:220.5px;font-size:21.55px;line-height:32.4px;color:#000;white-space:pre"><span style="color:#0000ff">import</span> <span style="position:relative;top:4px">*</span> <span style="color:#0000ff">as</span> wmill <span style="color:#0000ff">from</span> <span style="color:#a31515;text-decoration:underline wavy #e51400;text-decoration-thickness:1.5px;text-underline-offset:5px">"npm:windmill-client@^1.158.2"</span>

<span style="color:#0000ff">export</span> <span style="color:#0000ff">async</span> <span style="color:#0000ff">function</span> main<span style="color:#0431fa">(</span>approver?: <span style="color:#0000ff">string</span><span style="color:#0431fa">)</span> <span style="color:#0431fa">{</span>
  <span style="color:#0000ff">return</span> wmill.getResumeUrls<span style="color:#319331">(</span>approver<span style="color:#319331">)</span>
<span style="color:#0431fa">}</span></div>

<div class="a" style="left:1203px;top:890px;width:1673px;height:2px;background:#c9c9c9"></div>

<!-- TABS -->
<div class="a nw" id="t_tab1" style="left:1232px;top:903px;font-size:25.3px;line-height:28px;font-weight:700;color:#2d3748">Step Input</div>
<div class="a nw" id="t_tab2" style="left:1416px;top:903px;font-size:25.6px;line-height:28px;font-weight:700;color:#2d3748">Test this step</div>
<div class="a nw" id="t_tab3" style="left:1638px;top:903px;font-size:25.1px;line-height:28px;font-weight:700;color:#2d3748">Advanced</div>
<div class="a" style="left:1203px;top:944px;width:1673px;height:2px;background:#e5e7eb"></div>
<div class="a" style="left:1204px;top:941px;width:182px;height:4px;background:#2d3748"></div>

<!-- STEP INPUT -->
<div class="a nw" id="t_approver" style="left:1218px;top:1003px;font-size:28.7px;line-height:34px;font-weight:700;color:#2d3748">approver</div>
<div class="a nw" id="t_string" style="left:1358px;top:1007px;font-size:23px;line-height:28px;font-style:italic;color:#4a5568">string</div>
<div class="a" style="left:1955px;top:989px;width:113px;height:57px;border-radius:10px;background:#f3f4f6"></div>
<div class="a" style="left:1958px;top:993px;width:60px;height:50px;border-radius:9px;background:#fff;box-shadow:0 2px 5px rgba(0,0,0,0.12)"></div>
<div class="a nw" id="t_dollar" style="left:1958px;top:1004px;width:60px;text-align:center;font-size:22px;line-height:28px;font-weight:700;color:#2d3748;transform:scaleY(0.92)">${}</div>
<div class="a" style="left:2034px;top:1008px;width:21px;height:21px;border:2px solid #9aa1ad;border-radius:3px"></div>
<div class="a nw" style="left:2034px;top:1006px;width:21px;text-align:center;font-size:15px;line-height:24px;color:#8e95a2">ƒ</div>
<div class="a" style="left:2111px;top:996px;width:81px;height:45px;border:1px solid #e5e7eb;border-radius:9px;background:#fff"></div>
<svg class="a ic" style="left:2130px;top:1004px;color:#2d3748" width="22" height="27" viewBox="1 0 22 28" stroke-width="2.4"><path d="M12 27v-6"/><path d="M8 9V2"/><path d="M16 9V2"/><path d="M19 9v5a5 5 0 0 1-5 5h-4a5 5 0 0 1-5-5V9Z"/></svg>
<svg class="a ic" style="left:2156px;top:1009px;color:#2d3748" width="20" height="20" viewBox="0 0 24 24" stroke-width="2.7"><path d="M4 12h16"/><path d="m13 5 7 7-7 7"/></svg>
<div class="a" style="left:1217px;top:1068.5px;width:975px;height:50px;border:1.5px solid #c3c8d1;border-radius:7px;background:#fff"></div>
<div class="a" style="left:1222px;top:1071px;width:962px;height:34px;border-radius:8px;background:#fffffd;box-shadow:inset 0 2px 0 #f3f3f1, inset 0 -2px 0 #f3f3f1"></div>
<div class="a" style="left:1222px;top:1071px;width:25.5px;height:34px;border-radius:8px 0 0 8px;background:#f7f8fa"></div>
<div class="a" style="left:1247.5px;top:1071px;width:2.5px;height:34px;background:#efefef"></div>
<div class="a" style="left:2160px;top:1069px;width:1px;height:36px;background:#d9d9d9"></div>
<div class="a" style="left:2183px;top:1074px;width:3px;height:28px;border-radius:2px;background:#efefef"></div>

<div class="a" style="left:2206px;top:946px;width:2px;height:614px;background:#c9c9c9"></div>

<!-- RIGHT INPUT PANEL -->
<div class="a" style="left:2222px;top:961px;width:353px;height:42px;border-radius:7px;background:#dbe7fb"></div>
<svg class="a ic" style="left:2239px;top:969px;color:#1e40af" width="25" height="25" viewBox="0 0 24 24" stroke-width="2.5"><path d="m12 19-7-7 7-7"/><path d="M19 12H5"/></svg>
<div class="a nw" id="t_edit" style="left:2271px;top:968px;font-size:27.1px;line-height:28px;color:#1e40af;-webkit-text-stroke:0.5px #1e40af">Edit or connect an input</div>
<div class="a" style="left:2222px;top:1018px;width:640px;height:52px;border:2px solid #dfe2e6;border-radius:10px;background:#fff"></div>
<div class="a nw" id="t_search" style="left:2238px;top:1030px;font-size:26.1px;line-height:28px;color:#6b7280">Search prop...</div>
<div class="a" style="left:2208px;top:1084px;width:668px;height:476px;background:#f3f4f6"></div>
<div class="a nw" id="t_flowinput" style="left:2222px;top:1101px;font-size:25.4px;line-height:30px;font-weight:700;color:#2d3748">Flow Input</div>
<div class="a nw" id="t_noitems" style="left:2237px;top:1145px;font-size:21.6px;line-height:28px;color:#4a5568">No items ([])</div>
<div class="a nw" id="t_vars" style="left:2222px;top:1200px;font-size:26px;line-height:30px;font-weight:700;color:#2d3748">Variables</div>
<div class="a" style="left:2222px;top:1236px;width:61px;height:44px;border:2px solid #3b63e0;border-radius:8px"></div>
<div class="a nw" style="left:2222px;top:1243px;width:61px;text-align:center;font-size:25px;line-height:30px;color:#2d3748">{...}</div>
<div class="a nw" id="t_res2" style="left:2222px;top:1303px;font-size:25.3px;line-height:30px;font-weight:700;color:#2d3748">Resources</div>
<div class="a" style="left:2222px;top:1338px;width:61px;height:45px;border:2px solid #3b63e0;border-radius:8px"></div>
<div class="a nw" style="left:2222px;top:1345px;width:61px;text-align:center;font-size:25px;line-height:30px;color:#2d3748">{...}</div>

</body></html>
